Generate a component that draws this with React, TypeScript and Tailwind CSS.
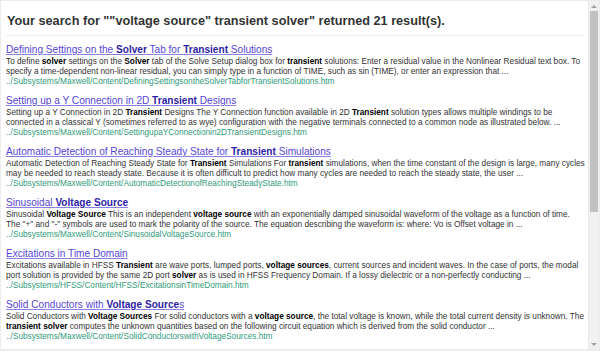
import React from "react";

type Seg = string | { b: string };

type Result = {
  title: Seg[];
  lines: Seg[][];
  url: string;
};

const results: Result[] = [
  {
    title: ["Defining Settings on the ", { b: "Solver" }, " Tab for ", { b: "Transient" }, " Solutions"],
    lines: [
      ["To define ", { b: "solver" }, " settings on the ", { b: "Solver" }, " tab of the Solve Setup dialog box for ", { b: "transient" }, " solutions: Enter a residual value in the Nonlinear Residual text box. To"],
      ["specify a time-dependent non-linear residual, you can simply type in a function of TIME, such as sin (TIME), or enter an expression that ..."],
    ],
    url: "../Subsystems/Maxwell/Content/DefiningSettingsontheSolverTabforTransientSolutions.htm",
  },
  {
    title: ["Setting up a Y Connection in 2D ", { b: "Transient" }, " Designs"],
    lines: [
      ["Setting up a Y Connection in 2D ", { b: "Transient" }, " Designs The Y Connection function available in 2D ", { b: "Transient" }, " solution types allows multiple windings to be"],
      ["connected in a classical Y (sometimes referred to as wye) configuration with the negative terminals connected to a common node as illustrated below. ..."],
    ],
    url: "../Subsystems/Maxwell/Content/SettingupaYConnectionin2DTransientDesigns.htm",
  },
  {
    title: ["Automatic Detection of Reaching Steady State for ", { b: "Transient" }, " Simulations"],
    lines: [
      ["Automatic Detection of Reaching Steady State for ", { b: "Transient" }, " Simulations For ", { b: "transient" }, " simulations, when the time constant of the design is large, many cycles"],
      ["may be needed to reach steady state. Because it is often difficult to predict how many cycles are needed to reach the steady state, the user ..."],
    ],
    url: "../Subsystems/Maxwell/Content/AutomaticDetectionofReachingSteadyState.htm",
  },
  {
    title: ["Sinusoidal ", { b: "Voltage Source" }],
    lines: [
      ["Sinusoidal ", { b: "Voltage Source" }, " This is an independent ", { b: "voltage source" }, " with an exponentially damped sinusoidal waveform of the voltage as a function of time."],
      ['The "+" and "-" symbols are used to mark the polarity of the source. The equation describing the waveform is: where: Vo is Offset voltage in ...'],
    ],
    url: "../Subsystems/Maxwell/Content/SinusoidalVoltageSource.htm",
  },
  {
    title: ["Excitations in Time Domain"],
    lines: [
      ["Excitations available in HFSS ", { b: "Transient" }, " are wave ports, lumped ports, ", { b: "voltage sources" }, ", current sources and incident waves. In the case of ports, the modal"],
      ["port solution is provided by the same 2D port ", { b: "solver" }, " as is used in HFSS Frequency Domain. If a lossy dielectric or a non-perfectly conducting ..."],
    ],
    url: "../Subsystems/HFSS/Content/HFSS/ExcitationsinTimeDomain.htm",
  },
  {
    title: ["Solid Conductors with ", { b: "Voltage Source" }, "s"],
    lines: [
      ["Solid Conductors with ", { b: "Voltage Sources" }, " For solid conductors with a ", { b: "voltage source" }, ", the total voltage is known, while the total current density is unknown. The"],
      [{ b: "transient solver" }, " computes the unknown quantities based on the following circuit equation which is derived from the solid conductor ..."],
    ],
    url: "../Subsystems/Maxwell/Content/SolidConductorswithVoltageSources.htm",
  },
];

function Segs({ segs, boldClass }: { segs: Seg[]; boldClass: string }) {
  return (
    <>
      {segs.map((s, i) =>
        typeof s === "string" ? (
          <span key={i}>{s}</span>
        ) : (
          <b key={i} className={boldClass}>
            {s.b}
          </b>
        )
      )}
    </>
  );
}

function ResultItem({ r }: { r: Result }) {
  return (
    <div className="mb-[7px]">
      <a href="#" className="block text-[10.1px] leading-[14px] text-[#5546d6] underline decoration-[#8a80e4]">
        <Segs segs={r.title} boldClass="font-bold text-[#2e1ea6]" />
      </a>
      <div className="text-[8.25px] leading-[10px] text-[#333] whitespace-nowrap">
        {r.lines.map((l, i) => (
          <div key={i}>
            <Segs segs={l} boldClass="font-bold text-black" />
          </div>
        ))}
      </div>
      <div className="text-[8.25px] leading-[10px] text-[#2f9b7b] whitespace-nowrap">{r.url}</div>
    </div>
  );
}

export default function App() {
  return (
    <div
      className="h-[351px] w-[600px] bg-[#ececec] pt-px pl-px pr-px pb-[2px]"
      style={{ fontFamily: '"Liberation Sans", Arial, sans-serif' }}
    >
      <div className="flex h-full bg-white">
        <div className="flex-1 overflow-hidden pl-[5px] pr-[4px]">
          <h1 className="pt-[11px] pl-px text-[12.7px] leading-[18px] font-bold text-[#333] whitespace-nowrap">
            Your search for &quot;&quot;voltage source&quot; transient solver&quot; returned 21 result(s).
          </h1>
          <div className="mt-[5px] mb-[7px] h-px bg-[#eeeeee]" />
          {results.map((r, i) => (
            <ResultItem key={i} r={r} />
          ))}
        </div>
        <div className="flex w-[11px] flex-col bg-[#f1f1f1] border-l border-[#e8e8e8]">
          <div className="flex h-[10px] items-center justify-center">
            <div className="h-0 w-0 border-x-[3px] border-b-[3px] border-x-transparent border-b-[#a3a3a3]" />
          </div>
          <div className="mx-px h-[201px] bg-[#c1c1c1]" />
          <div className="flex-1" />
          <div className="flex h-[10px] items-center justify-center">
            <div className="h-0 w-0 border-x-[3px] border-t-[3px] border-x-transparent border-t-[#a3a3a3]" />
          </div>
        </div>
      </div>
    </div>
  );
}
